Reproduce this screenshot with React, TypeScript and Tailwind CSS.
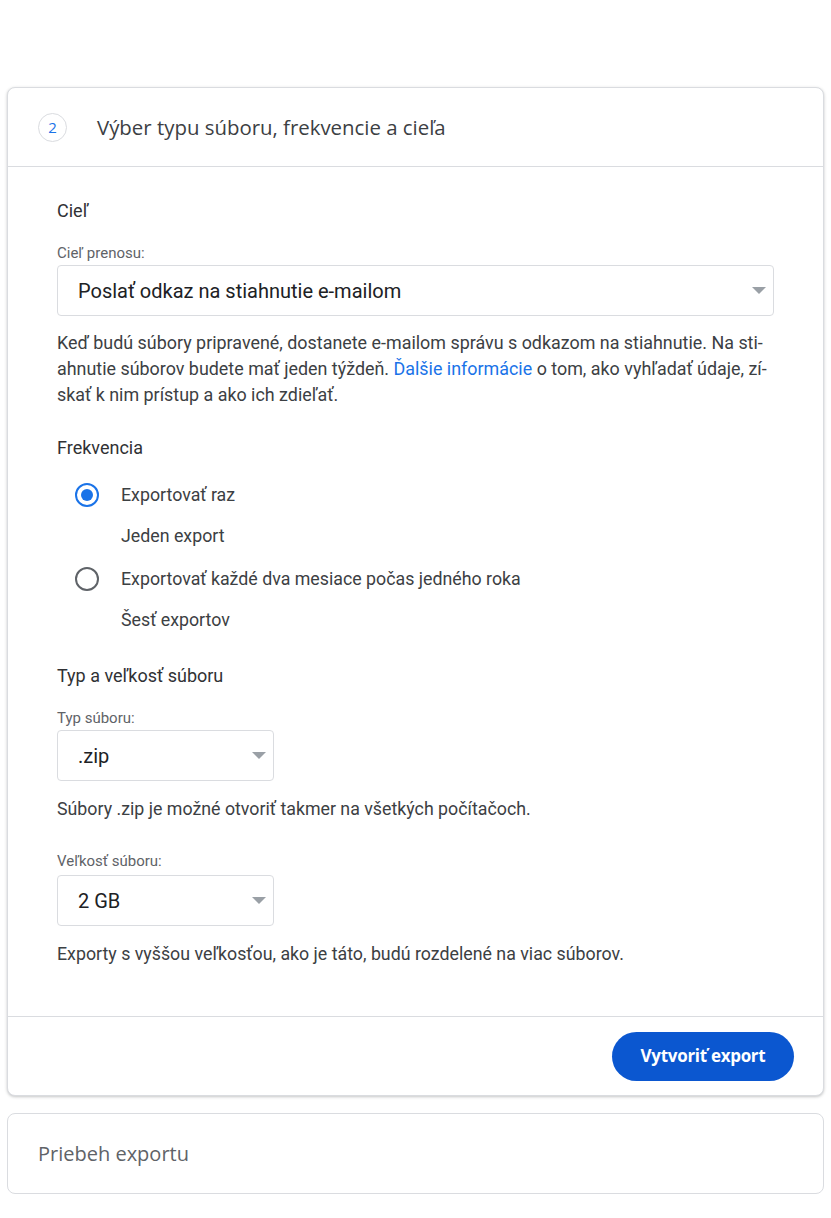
import React from "react";

function Caret() {
  return (
    <svg width="14" height="8" viewBox="0 0 14 8" className="shrink-0">
      <path d="M0 0 L14 0 L7 7 Z" fill="#9aa0a6" />
    </svg>
  );
}

function Select({ value, width }: { value: string; width: string }) {
  return (
    <div
      className={`${width} h-[51px] border border-[#dadce0] rounded-[4px] flex items-center justify-between pl-[20px] pr-[7px] text-[20px] text-[#202124]`}
    >
      <span>{value}</span>
      <Caret />
    </div>
  );
}

function Radio({ checked }: { checked: boolean }) {
  return checked ? (
    <div className="w-[24px] h-[24px] rounded-full border-[2px] border-[#1a73e8] flex items-center justify-center">
      <div className="w-[12px] h-[12px] rounded-full bg-[#1a73e8]" />
    </div>
  ) : (
    <div className="w-[24px] h-[24px] rounded-full border-[2px] border-[#5f6368]" />
  );
}

const gs = { fontFamily: "'Open Sans', Roboto, Arial, sans-serif" };

export default function App() {
  return (
    <div
      className="bg-white w-[831px] min-h-[1218px] pt-[87px] px-[7px]"
      style={{ fontFamily: "Roboto, 'Noto Sans', Arial, sans-serif" }}
    >
      <div className="w-[817px] rounded-[8px] border border-[#dadce0] shadow-[0_1px_3px_rgba(60,64,67,0.3)] bg-white">
        <div className="h-[79px] flex items-center pl-[30px] border-b border-[#dadce0]">
          <div
            className="w-[29px] h-[29px] rounded-full border border-[#dadce0] flex items-center justify-center text-[15px] text-[#1a73e8]"
            style={gs}
          >
            2
          </div>
          <div className="ml-[30px] text-[20.4px] text-[#3c4043]" style={gs}>
            Výber typu súboru, frekvencie a cieľa
          </div>
        </div>

        <div className="pl-[49px] pr-[50px] pt-[32px] pb-[50px] text-[#3c4043]">
          <div className="text-[18px] leading-[24px] text-[#303134]">Cieľ</div>
          <div className="mt-[20px] text-[15px] leading-[20px] text-[#5f6368]">
            Cieľ prenosu:
          </div>
          <div className="mt-[2px]">
            <Select value="Poslať odkaz na stiahnutie e-mailom" width="w-[717px]" />
          </div>
          <div className="mt-[14px] text-[17.9px] leading-[26px] text-[#3c4043] whitespace-nowrap">
            <div>
              Keď budú súbory pripravené, dostanete e-mailom správu s odkazom na stiahnutie. Na sti-
            </div>
            <div>
              ahnutie súborov budete mať jeden týždeň.{" "}
              <span className="text-[#1a73e8]">Ďalšie informácie</span> o tom, ako vyhľadať údaje, zí-
            </div>
            <div>skať k nim prístup a ako ich zdieľať.</div>
          </div>

          <div className="mt-[28px] text-[18px] leading-[24px] text-[#303134]">Frekvencia</div>
          <div className="mt-[23px] flex items-center h-[24px]">
            <div className="ml-[18px]">
              <Radio checked />
            </div>
            <div className="ml-[22px] text-[17.8px] text-[#3c4043]">Exportovať raz</div>
          </div>
          <div className="mt-[17px] ml-[64px] text-[17.8px] leading-[24px] text-[#3c4043]">
            Jeden export
          </div>
          <div className="mt-[19px] flex items-center h-[24px]">
            <div className="ml-[18px]">
              <Radio checked={false} />
            </div>
            <div className="ml-[22px] text-[17.8px] text-[#3c4043]">
              Exportovať každé dva mesiace počas jedného roka
            </div>
          </div>
          <div className="mt-[17px] ml-[64px] text-[17.8px] leading-[24px] text-[#3c4043]">
            Šesť exportov
          </div>

          <div className="mt-[32px] text-[18px] leading-[24px] text-[#303134]">
            Typ a veľkosť súboru
          </div>
          <div className="mt-[20px] text-[15px] leading-[20px] text-[#5f6368]">Typ súboru:</div>
          <div className="mt-[2px]">
            <Select value=".zip" width="w-[217px]" />
          </div>
          <div className="mt-[16px] text-[17.8px] leading-[24px] text-[#3c4043]">
            Súbory .zip je možné otvoriť takmer na všetkých počítačoch.
          </div>
          <div className="mt-[30px] text-[15px] leading-[20px] text-[#5f6368]">
            Veľkosť súboru:
          </div>
          <div className="mt-[4px]">
            <Select value="2 GB" width="w-[217px]" />
          </div>
          <div className="mt-[16px] text-[17.8px] leading-[24px] text-[#3c4043]">
            Exporty s vyššou veľkosťou, ako je táto, budú rozdelené na viac súborov.
          </div>
        </div>

        <div className="border-t border-[#dadce0] h-[79px] flex items-center justify-end pr-[29px]">
          <button
            className="h-[49px] w-[182px] rounded-full bg-[#0b57d0] text-white text-[17px] font-bold tracking-[-0.3px]"
            style={gs}
          >
            Vytvoriť export
          </button>
        </div>
      </div>

      <div
        className="mt-[17px] w-[817px] h-[81px] rounded-[8px] border border-[#dadce0] flex items-center pl-[30px] text-[20px] text-[#5f6368]"
        style={gs}
      >
        Priebeh exportu
      </div>
    </div>
  );
}
